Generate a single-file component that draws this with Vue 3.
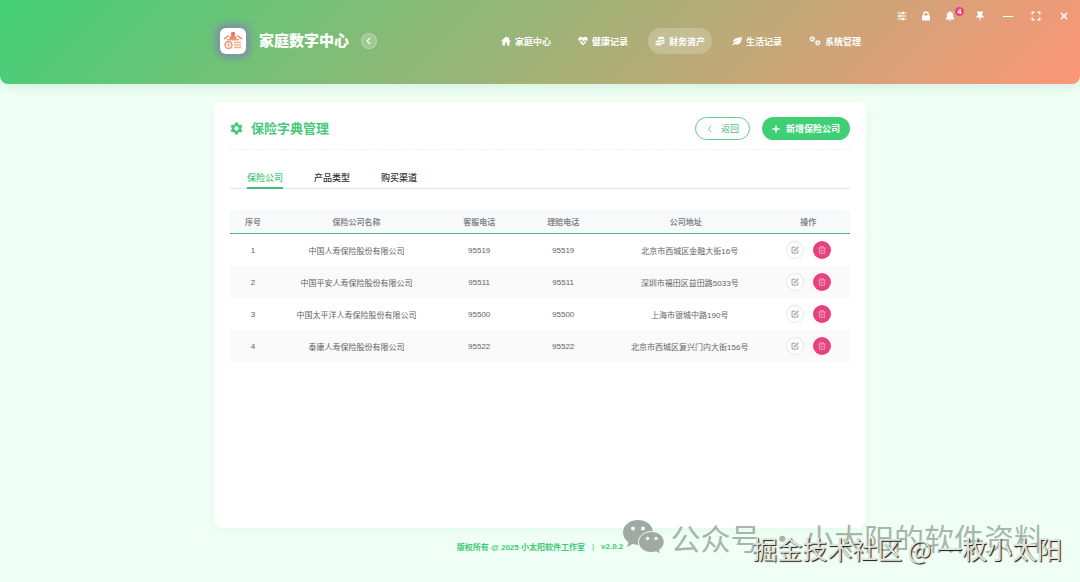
<script setup>
import { ref } from 'vue'

const navItems = [
	{ key: 'home', label: '家庭中心' },
	{ key: 'health', label: '健康记录' },
	{ key: 'finance', label: '财务资产' },
	{ key: 'life', label: '生活记录' },
	{ key: 'system', label: '系统管理' },
]
const activeNav = ref('finance')

const tabs = ['保险公司', '产品类型', '购买渠道']
const activeTab = ref('保险公司')

const companies = ref([
	{ id: 1, name: '中国人寿保险股份有限公司', service: '95519', claim: '95519', address: '北京市西城区金融大街16号' },
	{ id: 2, name: '中国平安人寿保险股份有限公司', service: '95511', claim: '95511', address: '深圳市福田区益田路5033号' },
	{ id: 3, name: '中国太平洋人寿保险股份有限公司', service: '95500', claim: '95500', address: '上海市银城中路190号' },
	{ id: 4, name: '泰康人寿保险股份有限公司', service: '95522', claim: '95522', address: '北京市西城区复兴门内大街156号' },
])

const removeCompany = (id) => {
	companies.value = companies.value.filter((item) => item.id !== id)
}
</script>

<template>
	<div class="app-shell">
		<header class="top-bar">
			<div class="window-tools">
				<div class="tool-group">
					<button type="button" aria-label="设置">
						<svg viewBox="0 0 20 20" fill="none" stroke="currentColor" stroke-width="2.2">
							<path d="M1 4h18M1 10h18M1 16h18" />
							<path d="M12 1.5v5M6 7.5v5M12 13.5v5" stroke-width="4" />
						</svg>
					</button>
					<button type="button" aria-label="锁定">
						<svg viewBox="0 0 20 20" fill="currentColor">
							<path d="M2 9h16v10H2z" />
							<path d="M5.5 10V6.500a4.500 4.500 0 0 1 9 0V10" fill="none" stroke="currentColor" stroke-width="2.600" />
						</svg>
					</button>
					<button type="button" aria-label="通知">
						<svg viewBox="0 0 20 20" fill="currentColor">
							<path d="M10 0.500a1.500 1.500 0 0 1 1.500 1.700c3 .7 4.800 3.200 4.800 6.100v4l2.400 3.200V17H1.300v-1.500l2.400-3.200v-4c0-2.900 1.800-5.400 4.800-6.100A1.500 1.500 0 0 1 10 .5zM7.500 18h5a2.500 2 0 0 1-5 0z" />
						</svg>
						<span class="badge">4</span>
					</button>
				</div>
				<button type="button" aria-label="置顶">
					<svg viewBox="0 0 20 20" fill="currentColor">
						<path d="M4 1h12v3h-1.800l.6 5c1.800.8 2.700 2 2.700 4h-6.300l-.6 6.500h-1.200L8.800 13H2.500c0-2 .9-3.200 2.700-4l.6-5H4z" />
					</svg>
				</button>
				<button type="button" aria-label="最小化">
					<svg viewBox="0 0 20 20" fill="none" stroke="currentColor" stroke-width="2.400"><path d="M0 11h20" /></svg>
				</button>
				<button type="button" aria-label="全屏">
					<svg viewBox="0 0 20 20" fill="none" stroke="currentColor" stroke-width="2.800">
						<path d="M2.500 7V2.500H7M13 2.500h4.500V7M17.500 13v4.500H13M7 17.500H2.500V13" />
					</svg>
				</button>
				<button type="button" aria-label="关闭">
					<svg viewBox="0 0 20 20" fill="none" stroke="currentColor" stroke-width="3.200"><path d="M4 4l12 12M16 4L4 16" /></svg>
				</button>
			</div>

			<div class="top-inner">
				<div class="brand">
					<span class="logo">
						<svg viewBox="0 0 20 20">
							<g fill="none" stroke="#ee9a7d" stroke-width="1.600">
								<path d="M1 8l5-3.500M19 8l-5-3.500" />
								<circle cx="5.500" cy="14" r="3.400" />
								<path d="M5.500 12.500v3M4 14h3" stroke-width="1.200" />
								<path d="M4 8.700h12" />
							</g>
							<circle cx="10" cy="3" r="2.200" fill="#e8785c" />
							<path d="M6.500 8c0-3 1.500-3.500 3.500-3.500S13.500 5 13.500 8z" fill="#ee8768" />
							<path d="M11 11.500h7M11 14h7M11 16.500h7" stroke="#f3b183" stroke-width="1.500" />
						</svg>
					</span>
					<h1>家庭数字中心</h1>
					<button type="button" class="collapse" aria-label="收起">
						<svg viewBox="0 0 20 20" fill="none" stroke="currentColor" stroke-width="3"><path d="M13 2l-8 8 8 8" /></svg>
					</button>
				</div>

				<nav class="main-nav">
					<a
						v-for="item in navItems"
						:key="item.key"
						href="#"
						:class="{ active: item.key === activeNav }"
						@click.prevent="activeNav = item.key"
					>
						<svg v-if="item.key === 'home'" viewBox="0 0 20 20" fill="currentColor">
							<path d="M10 1L0 10.500h3V19h5v-6h4v6h5v-8.500h3L16 6.500V2.500h-2.500V4z" />
						</svg>
						<svg v-else-if="item.key === 'health'" viewBox="0 0 20 20" fill="currentColor">
							<path d="M10 4C8 .8 3.500 1 1.700 3.500.2 5.500.5 8 1 9h4.500L7.500 6l3 6L12 9h7c.5-1 .8-3.500-.7-5.500C16.500 1 12 .8 10 4z" />
							<path d="M2.500 11l7.500 8 7.500-8h-4.300L10.500 15.500 7.500 10 6.700 11z" />
						</svg>
						<svg v-else-if="item.key === 'finance'" viewBox="0 0 20 20" fill="currentColor">
							<path d="M6 3.500C6 .5 19 .5 19 3.500S6 7.500 6 3.500zM6 6.500c3 2 10 2 13 0v2.500c-1 1.500-3 2-5 2-1-2.500-5-3-8-2.500zM14.500 12c1.700 0 3.500-.5 4.500-1.500V14c-1 1.300-2.500 1.800-4.500 2z" />
							<path d="M1 11c0-3 12-3 12 0s-12 3-12 0zM1 13.500c3 1.800 9 1.800 12 0v3.300c-2 3-10 3-12 0z" />
						</svg>
						<svg v-else-if="item.key === 'life'" viewBox="0 0 20 20" fill="currentColor">
							<path d="M19 1c-3 3-7 2-11 3.500-5 2-6.500 6-5 9.500C5.500 10.500 9 9 13 8.500 8.500 10.500 4 13 .5 18l1.700 1.200L5 16c7 2.800 13-1 14-8 .3-3 .3-5 0-7z" />
						</svg>
						<svg v-else class="wide" viewBox="0 0 24 20" fill="none" stroke="currentColor">
							<circle cx="6.500" cy="6" r="3.200" stroke-width="2.600" />
							<circle cx="6.500" cy="6" r="5" stroke-width="2" stroke-dasharray="2.600 2.600" />
							<circle cx="17.500" cy="13.500" r="3.200" stroke-width="2.600" />
							<circle cx="17.500" cy="13.500" r="5" stroke-width="2" stroke-dasharray="2.600 2.600" />
						</svg>
						<span>{{ item.label }}</span>
					</a>
				</nav>
			</div>
		</header>

		<main class="card">
			<div class="card-head">
				<h2>
					<svg viewBox="0 0 24 24" fill="currentColor">
						<path
							fill-rule="evenodd"
							d="M9.500 1h5l.7 3.300 2 1.200L20.500 4.500l2.500 4.300-2.500 2.200v2l2.500 2.200-2.500 4.300-3.300-1-2 1.200-.7 3.300h-5l-.7-3.300-2-1.200-3.300 1L1 15.200 3.500 13v-2L1 8.800l2.500-4.300 3.300 1 2-1.200zM12 8a4 4 0 1 0 0 8 4 4 0 0 0 0-8z"
						/>
					</svg>
					保险字典管理
				</h2>
				<div class="head-actions">
					<button type="button" class="btn btn-back">
						<svg viewBox="0 0 20 20" fill="none" stroke="currentColor" stroke-width="2"><path d="M13 2l-7 8 7 8" /></svg>
						返回
					</button>
					<button type="button" class="btn btn-add">
						<svg viewBox="0 0 20 20" fill="none" stroke="currentColor" stroke-width="3.400"><path d="M10 1v18M1 10h18" /></svg>
						新增保险公司
					</button>
				</div>
			</div>

			<div class="tabs" role="tablist">
				<button
					v-for="tab in tabs"
					:key="tab"
					type="button"
					role="tab"
					:aria-selected="tab === activeTab"
					:class="{ active: tab === activeTab }"
					@click="activeTab = tab"
				>
					{{ tab }}
				</button>
			</div>

			<table>
				<colgroup>
					<col class="col-index" />
					<col class="col-wide" />
					<col class="col-phone" />
					<col class="col-phone" />
					<col class="col-address" />
					<col />
				</colgroup>
				<thead>
					<tr>
						<th>序号</th>
						<th>保险公司名称</th>
						<th>客服电话</th>
						<th>理赔电话</th>
						<th>公司地址</th>
						<th>操作</th>
					</tr>
				</thead>
				<tbody>
					<tr v-for="(item, index) in companies" :key="item.id">
						<td>{{ index + 1 }}</td>
						<td>{{ item.name }}</td>
						<td>{{ item.service }}</td>
						<td>{{ item.claim }}</td>
						<td class="address">{{ item.address }}</td>
						<td>
							<div class="row-actions">
								<button type="button" class="edit" aria-label="编辑">
									<svg viewBox="0 0 20 20" fill="none" stroke="currentColor" stroke-width="1.800">
										<path d="M11 3H2.500v14.500H17V10" />
										<path d="M8 12.500l1-3L17 1.800l2 2-8 7.700z" />
									</svg>
								</button>
								<button type="button" class="remove" aria-label="删除" @click="removeCompany(item.id)">
									<svg viewBox="0 0 20 20" fill="none" stroke="currentColor" stroke-width="1.600">
										<path d="M1 5h18M6.500 5V1.500h7V5M3.500 5v13.500h13V5M8 9v6M12 9v6" />
									</svg>
								</button>
							</div>
						</td>
					</tr>
				</tbody>
			</table>
		</main>

		<footer class="page-footer">
			<span>版权所有 @ 2025 小太阳软件工作室</span>
			<span class="divider">|</span>
			<span>v2.0.2</span>
		</footer>

		<div class="mark mark-account">
			<svg viewBox="0 0 42 34">
				<path fill="#a0a9a2" d="M15 0C6.500 0 0 5.500 0 12.500c0 4 2.100 7.300 5.500 9.700L4 27l5.600-2.900c1.800.5 3.500.8 5.400.8 8.500 0 15-5.600 15-12.500S23.500 0 15 0z" />
				<path fill="#a0a9a2" stroke="#f1fdf5" d="M28.500 11.500C21 11.500 15.500 16.300 15.500 22c0 6 5.500 10.500 13 10.500 1.500 0 3-.2 4.500-.7l4.700 2.200-1.300-4c3-2 4.800-4.900 4.800-8 0-5.700-5.500-10.500-12.700-10.500z" />
				<g fill="#f1fdf5">
					<circle cx="10" cy="8.500" r="2" />
					<circle cx="20" cy="8.500" r="2" />
					<circle cx="24.500" cy="18.500" r="1.700" />
					<circle cx="33" cy="18.500" r="1.700" />
				</g>
			</svg>
			<span>公众号 · 小太阳的软件资料</span>
		</div>
		<div class="mark mark-community">掘金技术社区 @ 一枚小太阳</div>
	</div>
</template>

<style>
body {
	margin: 0;
	background: #f0fff5;
}
</style>

<style scoped>
.app-shell {
	position: relative;
	display: flex;
	flex-direction: column;
	min-height: 100vh;
	overflow: hidden;
	background: #f0fff5;
	color: #606266;
	font-family: 'Liberation Sans', 'Noto Sans CJK SC', sans-serif;
	font-size: 8px;
}

svg {
	display: block;
	flex: none;
}

button {
	padding: 0;
	border: none;
	background: none;
	color: inherit;
	font: inherit;
	cursor: pointer;
}

h1,
h2 {
	margin: 0;
}

.top-bar {
	position: relative;
	display: flex;
	justify-content: center;
	box-sizing: border-box;
	height: 84px;
	padding-bottom: 2px;
	border-radius: 0 0 8px 8px;
	background: linear-gradient(135deg, #42d077 0%, #fc9678 100%);
	box-shadow: 0 2px 12px rgba(46, 160, 100, 0.18);
	color: #fff;
}

.window-tools {
	position: absolute;
	top: 6px;
	right: 4px;
	display: flex;
	gap: 4px;
}

.tool-group {
	display: flex;
	margin-right: 2px;
}

.window-tools button {
	position: relative;
	display: flex;
	align-items: center;
	justify-content: center;
	width: 24px;
	height: 20px;
}

.window-tools svg {
	width: 10px;
	height: 10px;
}

.window-tools .badge {
	position: absolute;
	top: 1px;
	right: -2px;
	width: 9px;
	height: 9px;
	border-radius: 50%;
	background: #e6427c;
	font-size: 7px;
	font-weight: 700;
	line-height: 9px;
	text-align: center;
}

.top-inner {
	display: flex;
	align-items: center;
	justify-content: space-between;
	width: 100%;
	max-width: 656px;
}

.brand {
	display: flex;
	align-items: center;
	padding-left: 8px;
}

.logo {
	display: flex;
	align-items: center;
	justify-content: center;
	width: 26px;
	height: 26px;
	border-radius: 6px;
	background: #fff;
	box-shadow: 0 0 5px 5px rgba(125, 145, 165, 0.8);
}

.logo svg {
	width: 20px;
	height: 20px;
}

.brand h1 {
	margin-left: 13px;
	font-size: 15px;
	font-weight: 900;
	line-height: 20px;
}

.collapse {
	display: flex;
	align-items: center;
	justify-content: center;
	box-sizing: border-box;
	width: 16px;
	height: 16px;
	margin-left: 12px;
	border: 1px solid rgba(255, 255, 255, 0.25);
	border-radius: 50%;
	background: rgba(255, 255, 255, 0.22);
}

.collapse svg {
	width: 8px;
	height: 8px;
}

.main-nav {
	display: flex;
	gap: 13px;
}

.main-nav a {
	display: flex;
	align-items: center;
	gap: 4px;
	height: 26px;
	padding: 0 7px;
	border-radius: 13px;
	color: #fff;
	font-size: 9px;
	font-weight: 700;
	text-decoration: none;
	white-space: nowrap;
}

.main-nav a.active {
	background: rgba(255, 255, 255, 0.22);
}

.main-nav svg {
	width: 10px;
	height: 10px;
}

.main-nav svg.wide {
	width: 12px;
}

.card {
	flex: 1;
	box-sizing: border-box;
	width: 100%;
	max-width: 652px;
	margin: 18px auto 0;
	padding: 15px 16px;
	border-radius: 8px;
	background: #fff;
	box-shadow: 0 2px 10px rgba(46, 204, 113, 0.08);
}

.card-head {
	display: flex;
	align-items: center;
	justify-content: space-between;
	padding-bottom: 9px;
	border-bottom: 1px dashed #eef0f2;
}

.card-head h2 {
	display: flex;
	align-items: center;
	gap: 8px;
	color: #4ac87d;
	font-size: 13px;
	font-weight: 700;
	line-height: 20px;
}

.card-head h2 svg {
	width: 13px;
	height: 13px;
}

.head-actions {
	display: flex;
	gap: 12px;
}

.btn {
	display: flex;
	align-items: center;
	justify-content: center;
	box-sizing: border-box;
	height: 23px;
	border-radius: 12px;
	font-size: 9px;
	white-space: nowrap;
}

.btn svg {
	width: 8px;
	height: 8px;
}

.btn-back {
	gap: 7px;
	padding: 0 10px;
	border: 1px solid #5fce96;
	color: #4cb985;
}

.btn-add {
	gap: 6px;
	padding: 0 10px;
	background: #3fcf74;
	color: #fff;
	font-weight: 700;
}

.tabs {
	display: flex;
	gap: 31px;
	margin-top: 20px;
	padding-left: 17px;
	border-bottom: 1px solid #dfe2e6;
}

.tabs button {
	height: 19px;
	margin-bottom: -1px;
	border-bottom: 2px solid transparent;
	color: #303133;
	font-size: 9px;
	font-weight: 500;
	line-height: 17px;
}

.tabs button.active {
	border-bottom-color: #45bd82;
	color: #42c877;
}

table {
	width: 100%;
	margin-top: 21px;
	border-collapse: separate;
	border-spacing: 0;
	table-layout: fixed;
	text-align: center;
}

.col-index {
	width: 46px;
}

.col-wide {
	width: 26%;
}

.col-phone {
	width: 84px;
}

.col-address {
	width: 26%;
}

th,
td {
	padding: 0;
}

th {
	height: 23px;
	border-bottom: 1px solid #45bd82;
	background: #f7f9fb;
	color: #85898d;
	font-weight: 700;
}

th:first-child {
	border-top-left-radius: 6px;
}

th:last-child {
	border-top-right-radius: 6px;
}

td {
	height: 32px;
}

tbody tr:nth-child(even) td {
	background: #fafafa;
}

td.address {
	padding-left: 8px;
}

.row-actions {
	display: flex;
	justify-content: center;
	gap: 9px;
}

.row-actions button {
	display: flex;
	align-items: center;
	justify-content: center;
	box-sizing: border-box;
	width: 18px;
	height: 18px;
	border-radius: 50%;
}

.row-actions svg {
	width: 8px;
	height: 8px;
}

.row-actions .edit {
	border: 1px solid #e4e6e9;
	background: #fff;
	color: #777b80;
}

.row-actions .remove {
	background: #e6427c;
	color: #fbc3d7;
}

.page-footer {
	display: flex;
	align-items: center;
	justify-content: center;
	gap: 7px;
	height: 36px;
	padding-bottom: 18px;
	color: #42c877;
	font-weight: 700;
}

.page-footer .divider {
	font-weight: 400;
}

/* floating signatures over the page corner */
.mark {
	position: absolute;
	font-family: 'Noto Sans CJK SC', sans-serif;
	white-space: nowrap;
	pointer-events: none;
}

.mark-account {
	right: 36px;
	bottom: 22px;
	display: flex;
	align-items: center;
	gap: 6px;
	color: rgba(125, 138, 130, 0.65);
	font-size: 30px;
	line-height: 46px;
}

.mark-account svg {
	width: 42px;
	height: 34px;
}

.mark-community {
	right: 18px;
	bottom: 16px;
	color: #dfe3e0;
	font-size: 25px;
	line-height: 36px;
	text-shadow: 1px 1px 1px #111;
}
</style>
